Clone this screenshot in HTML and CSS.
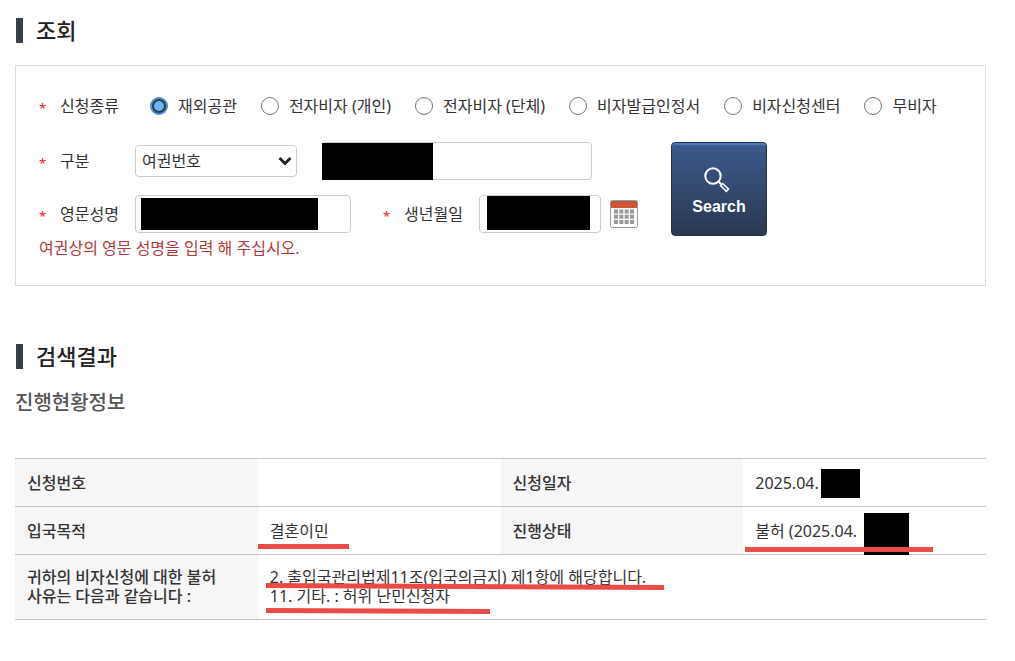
FILE: index.html
```html
<!DOCTYPE html>
<html lang="ko">
<head>
    <meta charset="UTF-8">
    <title>진행현황 조회</title>
    <link rel="stylesheet" href="styles.css">
</head>
<body>
    <div class="container">
        <h1 class="section-title">조회</h1>
        <form class="search-form">
            <div class="form-row type-row" role="radiogroup" aria-labelledby="typeLabel">
                <span class="star">*</span>
                <span class="field-label" id="typeLabel">신청종류</span>
                <div class="radio-list">
                    <label><input type="radio" name="applyType" value="1" checked>재외공관</label>
                    <label><input type="radio" name="applyType" value="2">전자비자 (개인)</label>
                    <label><input type="radio" name="applyType" value="3">전자비자 (단체)</label>
                    <label><input type="radio" name="applyType" value="4">비자발급인정서</label>
                    <label><input type="radio" name="applyType" value="5">비자신청센터</label>
                    <label><input type="radio" name="applyType" value="6">무비자</label>
                </div>
            </div>

            <div class="form-main">
                <div class="form-fields">
                    <div class="form-row">
                        <span class="star">*</span>
                        <label class="field-label" for="searchType">구분</label>
                        <div class="select-box">
                            <select id="searchType" name="searchType">
                                <option>여권번호</option>
                            </select>
                            <svg class="arrow" width="14" height="10" viewBox="0 0 14 10"><path d="M1.5 2 L7 7.5 L12.5 2" fill="none" stroke="#222" stroke-width="2.8"/></svg>
                        </div>
                        <div class="input-box passport">
                            <input type="text" name="passportNo" aria-label="여권번호">
                            <span class="mask"></span>
                        </div>
                    </div>
                    <div class="form-row">
                        <span class="star">*</span>
                        <label class="field-label" for="engName">영문성명</label>
                        <div class="input-box name">
                            <input type="text" id="engName" name="engName">
                            <span class="mask"></span>
                        </div>
                        <span class="star second">*</span>
                        <label class="field-label" for="birthDate">생년월일</label>
                        <div class="input-box birth">
                            <input type="text" id="birthDate" name="birthDate">
                            <span class="mask"></span>
                        </div>
                        <button type="button" class="calendar-button" aria-label="달력">
                            <svg width="28" height="28" viewBox="0 0 28 28">
                                <rect x="0.5" y="0.5" width="27" height="27" rx="2" fill="#fff" stroke="#999"/>
                                <path d="M1 2 Q1 1 2 1 H26 Q27 1 27 2 V8 H1 Z" fill="#cf5335"/>
                                <path d="M1 1.5 H27" stroke="#a85a48"/>
                                <path d="M4 11.5 H24 M4 16.8 H24 M4 22 H24" stroke="#999" stroke-width="4" stroke-dasharray="4 1.33"/>
                            </svg>
                        </button>
                    </div>
                </div>
                <button type="submit" class="search-button">
                    <svg width="32" height="28" viewBox="0 0 32 28" fill="none" stroke="#fff">
                        <circle cx="10" cy="10" r="7.7" stroke-width="2"/>
                        <path d="M15.5 15.5 L18 18" stroke-width="2"/>
                        <path d="M17.5 19.5 L19.5 17.5 L25.5 23 L23.3 25.3 Z" stroke-width="1.6"/>
                    </svg>
                    Search
                </button>
            </div>
            <p class="hint">여권상의 영문 성명을 입력 해 주십시오.</p>
        </form>

        <h1 class="section-title">검색결과</h1>
        <h2 class="sub-title">진행현황정보</h2>
        <table class="result-table">
            <tr>
                <th scope="row">신청번호</th>
                <td></td>
                <th scope="row">신청일자</th>
                <td>2025.04.<span class="date-mask"></span></td>
            </tr>
            <tr>
                <th scope="row">입국목적</th>
                <td>결혼이민
                    <svg class="mark mark-purpose" width="91" height="5"><path d="M0 2.5 H91"/></svg>
                </td>
                <th scope="row">진행상태</th>
                <td>불허 (2025.04.<span class="date-mask status"></span>
                    <svg class="mark mark-status" width="188" height="5"><path d="M0 2.5 H188"/></svg>
                </td>
            </tr>
            <tr class="reason">
                <th scope="row">귀하의 비자신청에 대한 불허 사유는 다음과 같습니다 :</th>
                <td colspan="3">2. 출입국관리법제11조(입국의금지) 제1항에 해당합니다.<br>11. 기타. : 허위 난민신청자
                    <svg class="mark mark-law" width="398" height="7"><path d="M0 2.5 L398 4.5"/></svg>
                    <svg class="mark mark-etc" width="224" height="6"><path d="M0 2.5 L224 3.5"/></svg>
                </td>
            </tr>
        </table>
    </div>
</body>
</html>
```
FILE: styles.css
```css
* {
    box-sizing: border-box;
}

body {
    font-family: "Noto Sans", "Noto Sans CJK KR", sans-serif;
    font-size: 16px;
    line-height: 20px;
    color: #333;
    background-color: #fff;
    margin: 0;
}

.container {
    padding: 16px 29px 16px 15px;
}

.section-title {
    display: flex;
    align-items: center;
    gap: 13px;
    margin: 0;
    font-size: 22px;
    line-height: 28px;
    font-weight: 500;
    color: #222;
}

.section-title::before {
    content: "";
    width: 7px;
    height: 25px;
    margin-left: 1px;
    background-color: #37404a;
}

/* search form */
.search-form {
    margin: 21px 0 56px;
    padding: 24px 23px 27px;
    border: 1px solid #ddd;
}

.form-row {
    display: flex;
    align-items: center;
}

.type-row {
    height: 32px;
}

.star {
    width: 21px;
    padding-top: 3px;
    color: #f02020;
    font-size: 13px;
}

.star.second {
    margin-left: 32px;
}

.field-label {
    width: 75px;
}

.radio-list {
    display: flex;
    gap: 24px;
    margin-left: 15px;
    white-space: nowrap;
}

.radio-list label {
    display: flex;
    align-items: center;
    gap: 10px;
}

input[type="radio"] {
    appearance: none;
    width: 18px;
    height: 18px;
    margin: 0;
    border: 1px solid #767676;
    border-radius: 50%;
    background-color: #fff;
}

input[type="radio"]:checked {
    width: 14px;
    height: 14px;
    margin: 2px;
    border: 2px solid #2b3b4e;
    background-color: #6cb4f6;
    box-shadow: 0 0 0 2px #4c8fd0;
}

.form-main {
    display: flex;
    gap: 33px;
    margin-top: 20px;
}

.form-fields {
    display: flex;
    flex-direction: column;
    gap: 15px;
}

.select-box,
.input-box {
    position: relative;
}

.select-box {
    width: 162px;
    margin-right: 25px;
}

select {
    appearance: none;
    display: block;
    width: 100%;
    height: 32px;
    padding: 0 6px;
    border: 1px solid #ccc;
    border-radius: 4px;
    background-color: #fff;
    font: inherit;
    color: #333;
}

.arrow {
    position: absolute;
    right: 5px;
    top: 11px;
    pointer-events: none;
}

input[type="text"] {
    display: block;
    width: 100%;
    height: 38px;
    padding: 0 6px;
    border: 1px solid #ccc;
    border-radius: 4px;
    font: inherit;
}

.mask {
    position: absolute;
    background-color: #000;
}

.passport {
    width: 270px;
}

.passport .mask {
    left: 0;
    top: 1px;
    width: 111px;
    height: 37px;
}

.name {
    width: 216px;
}

.name .mask {
    left: 6px;
    top: 3px;
    width: 177px;
    height: 32px;
}

.birth {
    width: 122px;
}

.birth .mask {
    left: 8px;
    top: 1px;
    width: 103px;
    height: 34px;
}

.calendar-button {
    display: block;
    margin-left: 9px;
    padding: 0;
    border: none;
    background: none;
    line-height: 0;
    cursor: pointer;
}

.search-button {
    display: flex;
    flex-direction: column;
    align-items: center;
    justify-content: center;
    gap: 4px;
    width: 96px;
    height: 94px;
    padding: 3px 0 0;
    border: 1px solid #25303f;
    border-radius: 4px;
    background: linear-gradient(#3d5a8c, #2a3850);
    box-shadow: inset 0 3px 1px -1px #4a7cc9;
    color: #fff;
    font-family: "Liberation Sans", Arial, sans-serif;
    font-size: 16px;
    font-weight: bold;
    cursor: pointer;
}

.hint {
    margin: 2px 0 0;
    color: #b03a3a;
}

/* search result */
.sub-title {
    margin: 20px 0 42px;
    font-size: 20px;
    line-height: 26px;
    font-weight: 500;
    color: #555;
}

.result-table {
    width: 100%;
    table-layout: fixed;
    border-collapse: collapse;
    border-top: 1px solid #c4c4c4;
}

.result-table th,
.result-table td {
    position: relative;
    height: 48px;
    padding: 0 12px;
    border-bottom: 1px solid #c4c4c4;
    text-align: left;
    word-break: keep-all;
}

.result-table th {
    background-color: #f6f6f6;
    font-weight: 500;
}

.reason th,
.reason td {
    height: 65px;
    line-height: 19px;
}

.date-mask {
    position: absolute;
    top: 10px;
    left: 78px;
    width: 39px;
    height: 29px;
    background-color: #000;
}

.date-mask.status {
    top: 6px;
    left: 121px;
    width: 45px;
    height: 42px;
}

.mark {
    position: absolute;
    fill: none;
    stroke: #ea4b45;
    stroke-width: 5;
}

.mark-purpose {
    left: 0;
    bottom: 5px;
}

.mark-status {
    left: 2px;
    bottom: 2px;
}

.mark-law {
    left: 8px;
    top: 28px;
}

.mark-etc {
    left: 8px;
    top: 53px;
}
```
